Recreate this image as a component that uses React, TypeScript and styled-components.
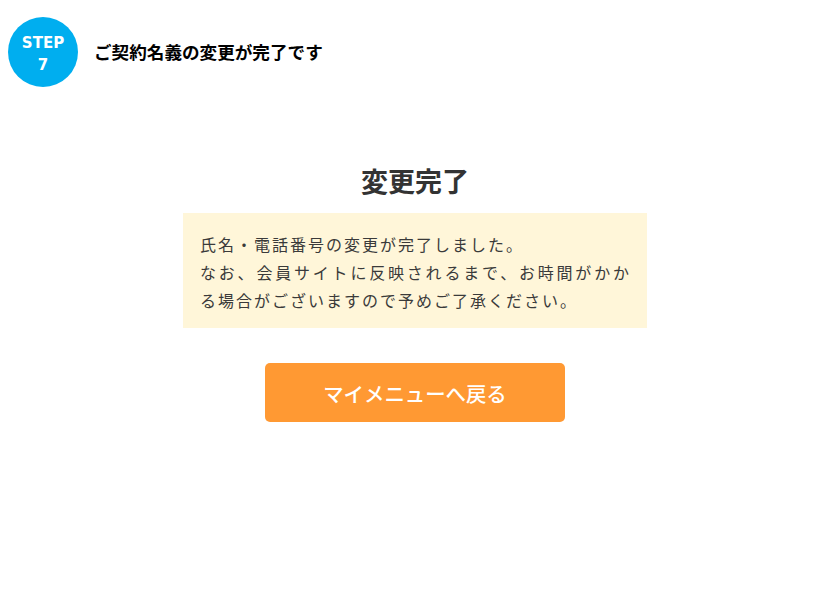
import React from "react";
import styled, { createGlobalStyle } from "styled-components";

const GlobalStyle = createGlobalStyle`
  html, body {
    margin: 0;
    padding: 0;
    background: #ffffff;
  }
  body {
    font-family: "Noto Sans CJK JP", "Noto Sans", sans-serif;
    color: #333333;
  }
`;

const Page = styled.div`
  width: 834px;
  min-height: 613px;
  box-sizing: border-box;
`;

const Header = styled.header`
  display: flex;
  align-items: center;
  gap: 16px;
  padding: 17px 8px 0;
`;

const StepBadge = styled.div`
  width: 70px;
  height: 70px;
  box-sizing: border-box;
  padding-top: 3px;
  border-radius: 50%;
  background: #00aeef;
  color: #ffffff;
  display: flex;
  flex-direction: column;
  align-items: center;
  justify-content: center;
  font-family: "DejaVu Sans", "Noto Sans", sans-serif;
  font-weight: 700;
  font-size: 15px;
  line-height: 22px;
`;

const HeaderTitle = styled.h1`
  margin: 0;
  font-size: 17.6px;
  font-weight: 700;
  color: #000000;
  line-height: 1.4;
`;

const Main = styled.main`
  display: flex;
  flex-direction: column;
  align-items: center;
  padding: 74px 4px 0 0;
`;

const Heading = styled.h2`
  margin: 0 0 12px;
  font-size: 27px;
  line-height: 40px;
  font-weight: 700;
  color: #333333;
`;

const Notice = styled.div`
  width: 464px;
  box-sizing: border-box;
  background: #fff6d9;
  padding: 17px 17px 14px 17px;
  font-size: 16px;
  line-height: 28px;
  color: #3a3a3a;
`;

const Line = styled.p<{ $tracking?: number }>`
  margin: 0;
  white-space: nowrap;
  letter-spacing: ${(p) => p.$tracking ?? 2}px;
`;

const BackButton = styled.button`
  margin-top: 35px;
  width: 300px;
  height: 59px;
  border: none;
  border-radius: 5px;
  background: #ff9933;
  color: #ffffff;
  font-family: "Noto Sans CJK JP", "Noto Sans", sans-serif;
  font-size: 20.4px;
  font-weight: 500;
  cursor: pointer;
`;

export default function App() {
  return (
    <Page lang="ja">
      <GlobalStyle />
      <Header>
        <StepBadge>
          <span>STEP</span>
          <span>7</span>
        </StepBadge>
        <HeaderTitle>ご契約名義の変更が完了です</HeaderTitle>
      </Header>
      <Main>
        <Heading>変更完了</Heading>
        <Notice>
          <Line>氏名・電話番号の変更が完了しました。</Line>
          <Line $tracking={2.8}>なお、会員サイトに反映されるまで、お時間がかか</Line>
          <Line>る場合がございますので予めご了承ください。</Line>
        </Notice>
        <BackButton type="button">マイメニューへ戻る</BackButton>
      </Main>
    </Page>
  );
}
